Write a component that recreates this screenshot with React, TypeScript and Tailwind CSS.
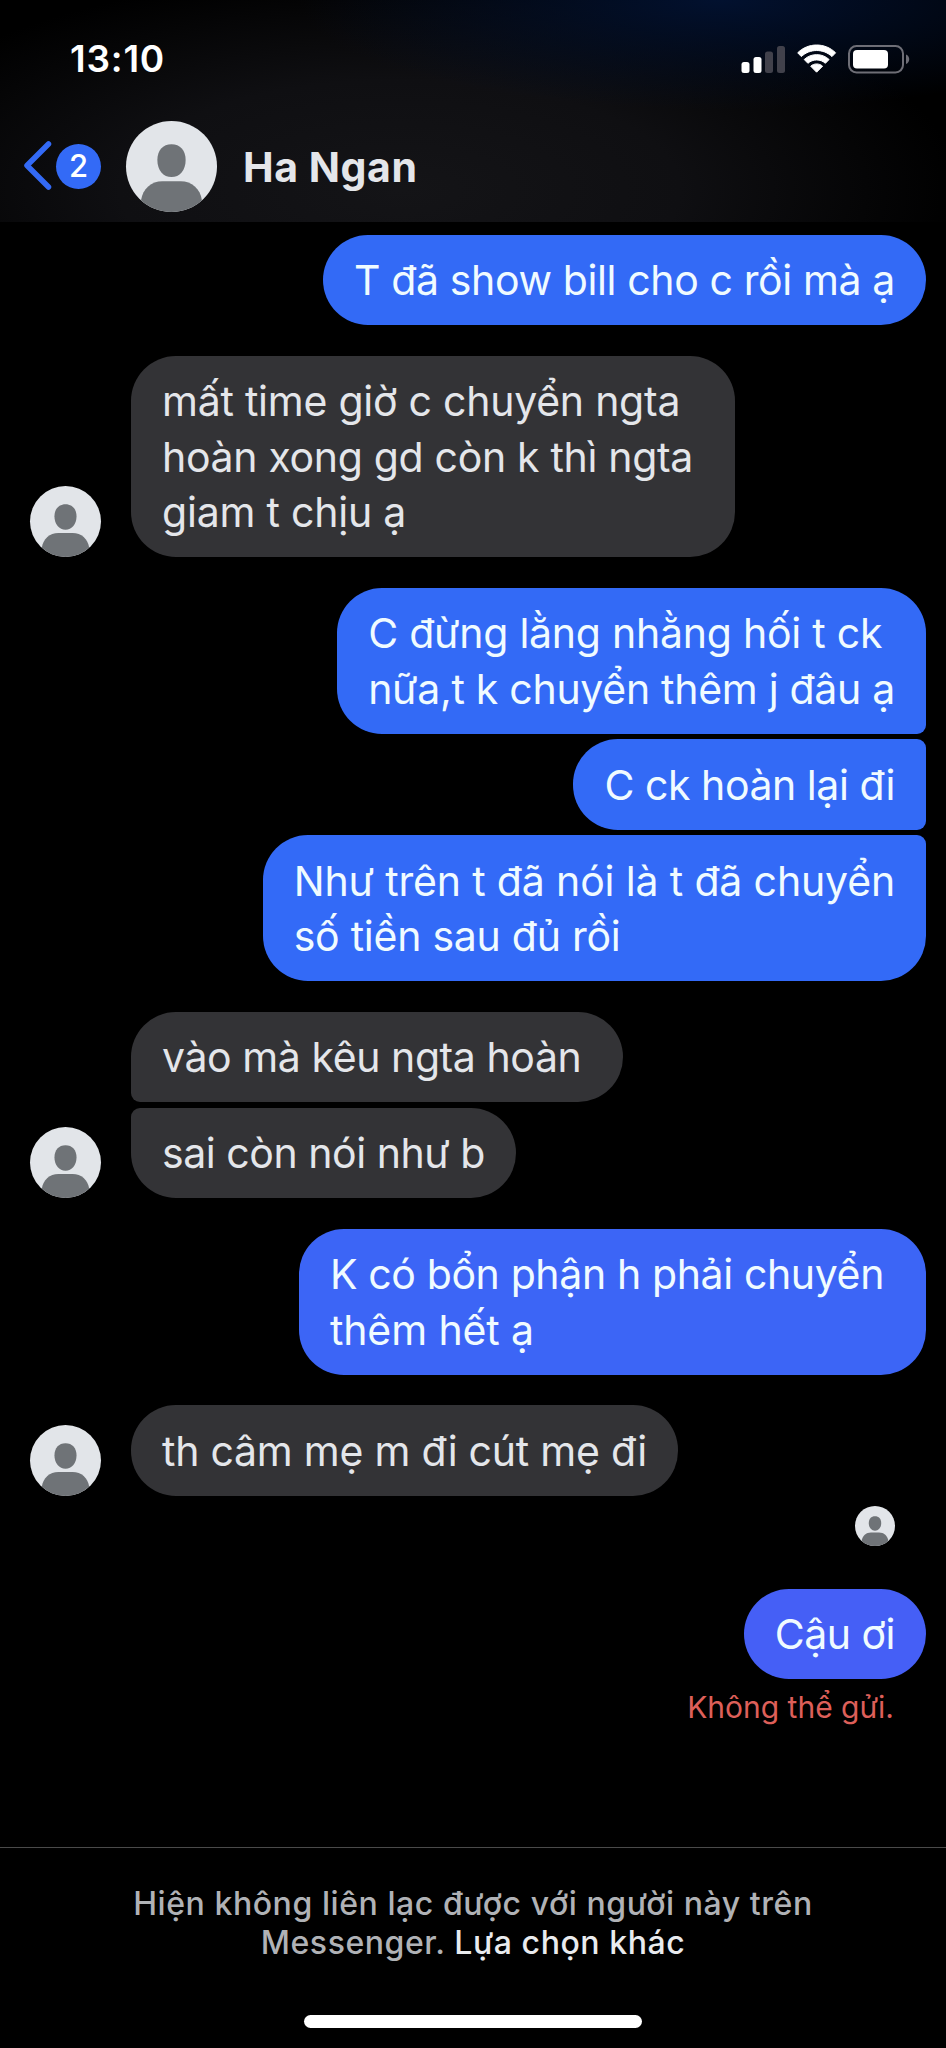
import React from 'react';

type Line = { text: string; tracking: string };
type Bubble = { lines: Line[]; className: string };
type Group = { from: 'me' | 'them'; bubbles: Bubble[] };

const groups: Group[] = [
    {
        from: 'me',
        bubbles: [{ lines: [{ text: 'T đã show bill cho c rồi mà ạ', tracking: 'tracking-[-0.38px]' }], className: 'bg-[#336af6]' }],
    },
    {
        from: 'them',
        bubbles: [
            {
                lines: [
                    { text: 'mất time giờ c chuyển ngta', tracking: 'tracking-[-0.24px]' },
                    { text: 'hoàn xong gd còn k thì ngta', tracking: 'tracking-[-0.32px]' },
                    { text: 'giam t chịu ạ', tracking: 'tracking-[-0.21px]' },
                ],
                className: 'pr-[42px]',
            },
        ],
    },
    {
        from: 'me',
        bubbles: [
            {
                lines: [
                    { text: 'C đừng lằng nhằng hối t ck', tracking: 'tracking-[-0.24px]' },
                    { text: 'nữa,t k chuyển thêm j đâu ạ', tracking: 'tracking-[-0.29px]' },
                ],
                className: 'bg-[#336af6] rounded-br-[9px]',
            },
            { lines: [{ text: 'C ck hoàn lại đi', tracking: 'tracking-[-0.45px]' }], className: 'bg-[#336af6] rounded-r-[9px]' },
            {
                lines: [
                    { text: 'Như trên t đã nói là t đã chuyển', tracking: 'tracking-[-0.15px]' },
                    { text: 'số tiền sau đủ rồi', tracking: 'tracking-[-0.25px]' },
                ],
                className: 'bg-[#336af7] rounded-tr-[9px]',
            },
        ],
    },
    {
        from: 'them',
        bubbles: [
            { lines: [{ text: 'vào mà kêu ngta hoàn', tracking: 'tracking-[-0.42px]' }], className: 'pr-[42px] rounded-bl-[9px]' },
            { lines: [{ text: 'sai còn nói như b', tracking: 'tracking-[-0.45px]' }], className: 'rounded-tl-[9px]' },
        ],
    },
    {
        from: 'me',
        bubbles: [
            {
                lines: [
                    { text: 'K có bổn phận h phải chuyển', tracking: 'tracking-[-0.37px]' },
                    { text: 'thêm hết ạ', tracking: 'tracking-[-0.1px]' },
                ],
                className: 'bg-[#3c65f6] pr-[42px]',
            },
        ],
    },
    {
        from: 'them',
        bubbles: [{ lines: [{ text: 'th câm mẹ m đi cút mẹ đi', tracking: 'tracking-[-0.24px]' }], className: '' }],
    },
];

const failedBubble: Bubble = { lines: [{ text: 'Cậu ơi', tracking: 'tracking-[-0.5px]' }], className: 'bg-[#455ff6]' };

const Avatar: React.FC<{ className: string }> = ({ className }) => (
    <svg viewBox="0 0 90 90" className={`shrink-0 rounded-full bg-[#e2e5e9] ${className}`}>
        <path d="M45 23C53.5 23 59 29 59 38.500C59 48.500 53 55.500 45 55.500S31 48.500 31 38.500C31 29 36.500 23 45 23Z" fill="#6f7377" />
        <path d="M15 78C16.500 67 25 59.500 36 59.500H54C65 59.500 73.500 67 75 78V90H15Z" fill="#6f7377" />
    </svg>
);

const StatusIcons: React.FC = () => (
    <svg viewBox="0 0 170 30" className="h-[30px] w-[170px]" fill="none">
        <rect x="0.500" y="18" width="8" height="11" rx="2.500" fill="#fff" />
        <rect x="12.500" y="13" width="8" height="16" rx="2.500" fill="#fff" />
        <rect x="24" y="7.500" width="8" height="21.500" rx="2.500" fill="#41414b" />
        <rect x="36" y="2" width="8" height="27" rx="2.500" fill="#41414b" />
        <path d="M56.700 8.800C67 -1.600 84.300 -1.600 94.600 8.800L91 12.600C82.500 4.500 68.800 4.500 60.300 12.600Z" fill="#fff" stroke="#fff" strokeLinejoin="round" />
        <path d="M63.200 15.500C70 9 81.300 9 88.100 15.500L84.400 19.300C79.500 14.800 71.800 14.800 66.900 19.300Z" fill="#fff" stroke="#fff" strokeLinejoin="round" />
        <path d="M69.700 22.200C73 19.200 78.300 19.200 81.600 22.200L75.600 28.200Z" fill="#fff" stroke="#fff" strokeLinejoin="round" />
        <rect x="108" y="2" width="54" height="26.500" rx="7.500" stroke="#6e6e76" strokeWidth="2" />
        <rect x="112" y="6" width="35" height="18.500" rx="4" fill="#fff" />
        <path d="M165 10.500C169.300 12.300 169.300 18.200 165 20Z" fill="#6e6e76" />
    </svg>
);

const MessageBubble: React.FC<{ bubble: Bubble; mine: boolean }> = ({ bubble, mine }) => (
    <div
        className={`flex flex-col whitespace-nowrap rounded-[45px] px-[31px] pt-[18.500px] pb-[16.500px] text-[41px] leading-[55.500px] ${
            mine ? 'text-[#f0fbff]' : 'bg-[#333336] text-[#e4e6ea]'
        } ${bubble.className}`}
    >
        {bubble.lines.map((line) => (
            <span key={line.text} className={line.tracking}>{line.text}</span>
        ))}
    </div>
);

export default function App() {
    return (
        <div className="flex h-[2048px] w-[946px] flex-col overflow-hidden bg-black font-['Inter','Liberation_Sans',sans-serif]">
            <header className="flex h-[222px] shrink-0 flex-col bg-[radial-gradient(ellipse_420px_110px_at_720px_0px,#02112f_0%,transparent_100%),radial-gradient(ellipse_560px_220px_at_400px_190px,#141417_0%,#0f0f12_50%,transparent_100%)]">
                <div className="flex h-[117px] items-center justify-between pr-[35px] pl-[70px]">
                    <span className="text-[37px] font-semibold tracking-[0.8px] text-white">13:10</span>
                    <StatusIcons />
                </div>
                <div className="flex h-[98px] items-center">
                    <svg viewBox="0 0 30 52" className="ml-[23px] h-[52px] w-[30px]" fill="none">
                        <path d="M25.500 4L4 25.500L25.500 47" stroke="#336af6" strokeWidth="5.500" strokeLinecap="round" strokeLinejoin="round" />
                    </svg>
                    <span className="ml-[3px] flex size-[45px] items-center justify-center rounded-full bg-[#336af6] text-[31px] font-medium text-white">2</span>
                    <Avatar className="ml-[25px] size-[91px]" />
                    <h1 className="mt-[4px] ml-[26px] text-[41px] font-bold tracking-[0.55px] text-[#e4e6ea]">Ha Ngan</h1>
                </div>
            </header>

            <main className="flex grow flex-col pt-[12.500px] pr-[20px] pl-[30px]">
                <div className="flex flex-col gap-[30.500px]">
                    {groups.map((group, idx) => (
                        <div key={idx} className={`flex items-end ${group.from === 'me' ? 'justify-end' : 'gap-[30px]'}`}>
                            {group.from === 'them' && <Avatar className="size-[71px]" />}
                            <div className={`flex flex-col gap-[5.500px] ${group.from === 'me' ? 'items-end' : 'items-start'}`}>
                                {group.bubbles.map((bubble, i) => (
                                    <MessageBubble key={i} bubble={bubble} mine={group.from === 'me'} />
                                ))}
                            </div>
                        </div>
                    ))}
                </div>
                <Avatar className="mt-[10px] mr-[31px] size-[40px] self-end" />
                <div className="mt-[43px] flex flex-col items-end">
                    <MessageBubble bubble={failedBubble} mine />
                    <span className="mt-[8px] mr-[32px] text-[30px] leading-[40px] text-[#dd5f59]">Không thể gửi.</span>
                </div>
            </main>

            <footer className="flex h-[201px] shrink-0 flex-col items-center border-t border-[#4a4a4a] pt-[36px]">
                <p className="text-center text-[32px] leading-[39px] font-medium tracking-[0.56px] whitespace-nowrap text-[#b0b2b6]">
                    Hiện không liên lạc được với người này trên
                    <br />
                    Messenger. <span className="text-[#e9ebee]">Lựa chọn khác</span>
                </p>
                <div className="mt-[53px] h-[13px] w-[338px] rounded-full bg-white" />
            </footer>
        </div>
    );
}
